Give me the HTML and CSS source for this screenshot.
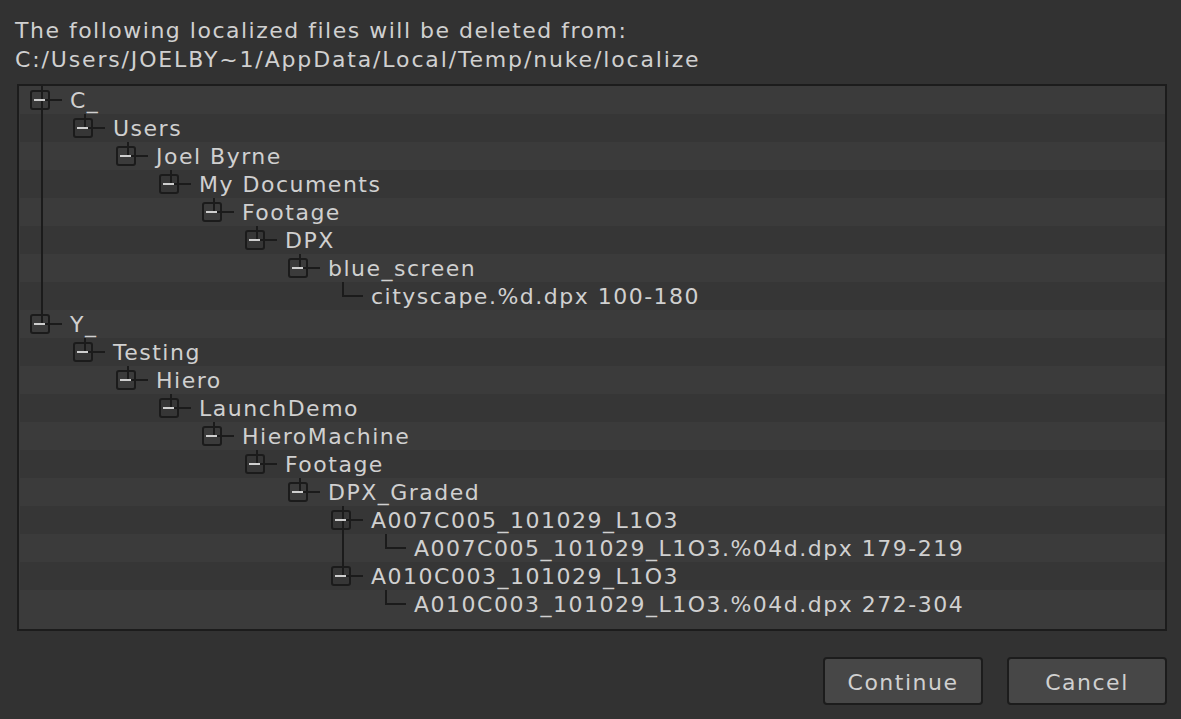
FILE: index.html
```html
<!DOCTYPE html>
<html>
<head>
<meta charset="utf-8">
<link rel="stylesheet" href="styles.css">
</head>
<body>
<div class="dialog">
  <div class="msg">
    <div class="line">The following localized files will be deleted from:</div>
    <div class="line path">C:/Users/JOELBY~1/AppData/Local/Temp/nuke/localize</div>
  </div>
  <div class="tree">
    <div class="row"><span class="n more"></span><span class="t">C_</span></div>
    <div class="row"><span class="g v"></span><span class="n"></span><span class="t">Users</span></div>
    <div class="row"><span class="g v"></span><span class="g"></span><span class="n"></span><span class="t">Joel Byrne</span></div>
    <div class="row"><span class="g v"></span><span class="g"></span><span class="g"></span><span class="n"></span><span class="t">My Documents</span></div>
    <div class="row"><span class="g v"></span><span class="g"></span><span class="g"></span><span class="g"></span><span class="n"></span><span class="t">Footage</span></div>
    <div class="row"><span class="g v"></span><span class="g"></span><span class="g"></span><span class="g"></span><span class="g"></span><span class="n"></span><span class="t">DPX</span></div>
    <div class="row"><span class="g v"></span><span class="g"></span><span class="g"></span><span class="g"></span><span class="g"></span><span class="g"></span><span class="n"></span><span class="t">blue_screen</span></div>
    <div class="row"><span class="g v"></span><span class="g"></span><span class="g"></span><span class="g"></span><span class="g"></span><span class="g"></span><span class="g"></span><span class="l"></span><span class="t">cityscape.%d.dpx 100-180</span></div>
    <div class="row"><span class="n"></span><span class="t">Y_</span></div>
    <div class="row"><span class="g"></span><span class="n"></span><span class="t">Testing</span></div>
    <div class="row"><span class="g"></span><span class="g"></span><span class="n"></span><span class="t">Hiero</span></div>
    <div class="row"><span class="g"></span><span class="g"></span><span class="g"></span><span class="n"></span><span class="t">LaunchDemo</span></div>
    <div class="row"><span class="g"></span><span class="g"></span><span class="g"></span><span class="g"></span><span class="n"></span><span class="t">HieroMachine</span></div>
    <div class="row"><span class="g"></span><span class="g"></span><span class="g"></span><span class="g"></span><span class="g"></span><span class="n"></span><span class="t">Footage</span></div>
    <div class="row"><span class="g"></span><span class="g"></span><span class="g"></span><span class="g"></span><span class="g"></span><span class="g"></span><span class="n"></span><span class="t">DPX_Graded</span></div>
    <div class="row"><span class="g"></span><span class="g"></span><span class="g"></span><span class="g"></span><span class="g"></span><span class="g"></span><span class="g"></span><span class="n more"></span><span class="t">A007C005_101029_L1O3</span></div>
    <div class="row"><span class="g"></span><span class="g"></span><span class="g"></span><span class="g"></span><span class="g"></span><span class="g"></span><span class="g"></span><span class="g v"></span><span class="l"></span><span class="t">A007C005_101029_L1O3.%04d.dpx 179-219</span></div>
    <div class="row"><span class="g"></span><span class="g"></span><span class="g"></span><span class="g"></span><span class="g"></span><span class="g"></span><span class="g"></span><span class="n"></span><span class="t">A010C003_101029_L1O3</span></div>
    <div class="row"><span class="g"></span><span class="g"></span><span class="g"></span><span class="g"></span><span class="g"></span><span class="g"></span><span class="g"></span><span class="g"></span><span class="l"></span><span class="t">A010C003_101029_L1O3.%04d.dpx 272-304</span></div>
  </div>
  <div class="buttons">
    <button class="btn">Continue</button>
    <button class="btn">Cancel</button>
  </div>
</div>
</body>
</html>
```

FILE: styles.css
```css
html, body {
  margin: 0;
  padding: 0;
  background: #323232;
}
body {
  width: 1181px;
  height: 719px;
  overflow: hidden;
  font-family: "DejaVu Sans", Verdana, sans-serif;
  font-size: 22px;
  letter-spacing: 1.5px;
  color: #d0d0d0;
}
.dialog {
  display: flex;
  flex-direction: column;
}
.msg {
  padding: 16px 0 0 15px;
}
.line {
  line-height: 28px;
  height: 28px;
  padding-top: 1px;
  white-space: nowrap;
}
.line.path {
  letter-spacing: 1.85px;
}
.tree {
  margin: 10px 0 0 17px;
  width: 1145px;
  height: 543px;
  border: 2px solid #1c1c1c;
  background: #3b3b3b;
  padding-left: 1px;
  box-sizing: content-box;
  overflow: hidden;
}
.row {
  display: flex;
  height: 28px;
  white-space: nowrap;
}
.row:nth-child(even) {
  background: #363636;
}
.g, .n, .l {
  flex: none;
  width: 43px;
  height: 28px;
}
.g.v {
  background: linear-gradient(#1b1b1b, #1b1b1b) 21px 0 / 2px 28px no-repeat;
}
.n {
  display: flex;
  align-items: center;
  padding-left: 10px;
  box-sizing: border-box;
  background:
    linear-gradient(#1b1b1b, #1b1b1b) 21px 0 / 2px 14px no-repeat,
    linear-gradient(#1b1b1b, #1b1b1b) 21px 13px / 21px 2px no-repeat;
}
.n.more {
  background:
    linear-gradient(#1b1b1b, #1b1b1b) 21px 0 / 2px 28px no-repeat,
    linear-gradient(#1b1b1b, #1b1b1b) 21px 13px / 21px 2px no-repeat;
}
.n::before {
  content: "";
  width: 20px;
  height: 20px;
  box-sizing: border-box;
  border: 2px solid #1b1b1b;
  border-radius: 3px;
  background: linear-gradient(#cfcfcf, #cfcfcf) 2px 7px / 11px 2px no-repeat;
}
.l {
  background:
    linear-gradient(#1b1b1b, #1b1b1b) 21px 0 / 2px 15px no-repeat,
    linear-gradient(#1b1b1b, #1b1b1b) 21px 13px / 21px 2px no-repeat;
}
.t {
  padding: 1px 0 0 7px;
  line-height: 28px;
  height: 28px;
  box-sizing: border-box;
}
.buttons {
  display: flex;
  justify-content: flex-end;
  gap: 24px;
  padding: 26px 14px 0 0;
}
.btn {
  width: 160px;
  height: 48px;
  background: #474747;
  border: 2px solid #1c1c1c;
  border-radius: 4px;
  color: #d0d0d0;
  font-family: "DejaVu Sans", Verdana, sans-serif;
  font-size: 22px;
  letter-spacing: 1.5px;
  padding: 2px 0 0;
}
```
